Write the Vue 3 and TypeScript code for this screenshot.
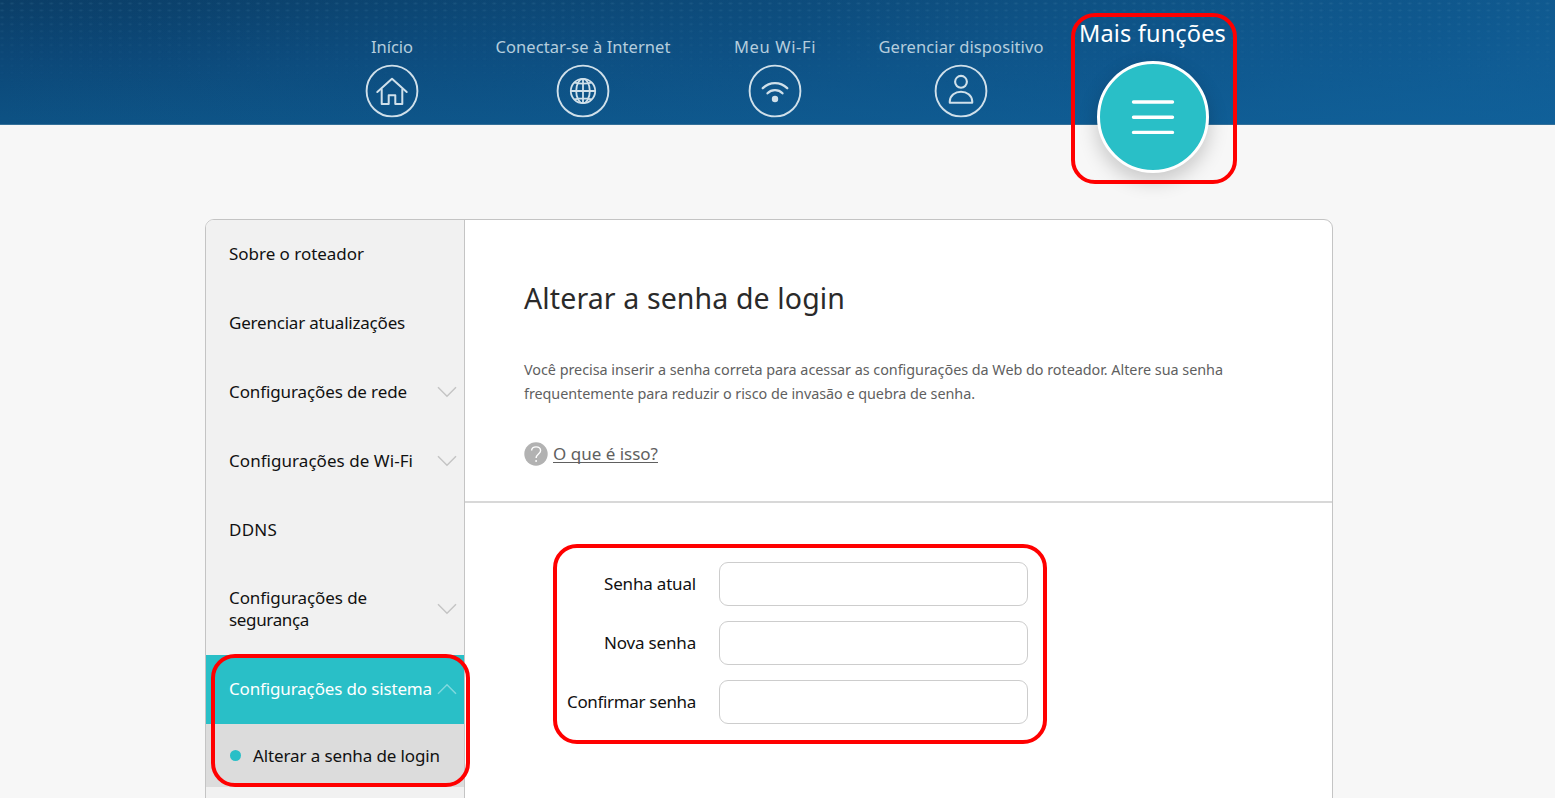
<script setup lang="ts">
import { reactive } from 'vue'

interface Line { text: string; width: number }
interface NavItem extends Line { icon: string }
interface MenuItem { lines: Line[]; chevron?: 'up' | 'down'; active?: boolean }

const nav: NavItem[] = [
  { text: 'Início', width: 42, icon: 'home' },
  { text: 'Conectar-se à Internet', width: 175, icon: 'globe' },
  { text: 'Meu Wi-Fi', width: 82, icon: 'wifi' },
  { text: 'Gerenciar dispositivo', width: 165, icon: 'user' }
]

const menu: MenuItem[] = [
  { lines: [{ text: 'Sobre o roteador', width: 135 }] },
  { lines: [{ text: 'Gerenciar atualizações', width: 176 }] },
  { lines: [{ text: 'Configurações de rede', width: 178 }], chevron: 'down' },
  { lines: [{ text: 'Configurações de Wi-Fi', width: 184 }], chevron: 'down' },
  { lines: [{ text: 'DDNS', width: 48 }] },
  { lines: [{ text: 'Configurações de', width: 138 }, { text: 'segurança', width: 80 }], chevron: 'down' },
  { lines: [{ text: 'Configurações do sistema', width: 203 }], chevron: 'up', active: true }
]

const intro: Line[] = [
  { text: 'Você precisa inserir a senha correta para acessar as configurações da Web do roteador. Altere sua senha', width: 699 },
  { text: 'frequentemente para reduzir o risco de invasão e quebra de senha.', width: 451 }
]

const fields = reactive([
  { id: 'current', text: 'Senha atual', width: 92, value: '' },
  { id: 'new', text: 'Nova senha', width: 92, value: '' },
  { id: 'confirm', text: 'Confirmar senha', width: 129, value: '' }
])

// Tracks a label so that it fills the measure given for it.
const vFit = {
  mounted(el: HTMLElement, binding: { value: number }) {
    const count = (el.textContent ?? '').trim().length
    const natural = el.getBoundingClientRect().width
    el.style.letterSpacing = `${(binding.value - natural) / count}px`
  }
}
</script>

<template>
  <div class="page">
    <header class="header">
      <nav class="nav">
        <a v-for="item in nav" :key="item.icon" class="nav-item">
          <span v-fit="item.width" class="nav-label">{{ item.text }}</span>
          <svg class="nav-icon" viewBox="0 0 54 54">
            <circle cx="27" cy="27" r="25.4" stroke-width="1.9" />
            <g v-if="item.icon === 'home'" stroke-width="2" stroke-linejoin="round" stroke-linecap="round">
              <path d="M12.3 28 27 14.8 41.7 28" />
              <path d="M16.7 25.5V40h7V31.2h6.6V40h7V25.5" />
            </g>
            <g v-else-if="item.icon === 'globe'" stroke-width="1.8">
              <circle cx="27" cy="27" r="12.2" />
              <ellipse cx="27" cy="27" rx="6.8" ry="12.2" />
              <path d="M27 15v24M15 27h24M18.5 18.6q8.5 2.2 17 0M18.5 35.4q8.5-2.2 17 0" />
            </g>
            <g v-else-if="item.icon === 'wifi'" stroke-width="2.3" stroke-linecap="round">
              <path d="M14.8 24.2Q20 19.2 27 19.2T39.2 24.2" />
              <path d="M19.5 29.3Q22.5 26.2 27 26.2T34.5 29.3" />
              <circle class="solid" cx="27" cy="35" r="3.2" />
            </g>
            <g v-else stroke-width="2.1" stroke-linejoin="round">
              <circle cx="27" cy="17.8" r="5.9" />
              <path d="M15.8 38.7V37C16.3 31.4 21 27.8 27 27.8S37.7 31.4 38.2 37v1.7Z" />
            </g>
          </svg>
        </a>
        <a class="nav-item current">
          <span v-fit="147" class="nav-label">Mais funções</span>
          <span class="more">
            <svg viewBox="0 0 44 38"><path d="M2.5 4h39M2.5 19.2h39M2.5 34.4h39" /></svg>
          </span>
        </a>
      </nav>
    </header>

    <main class="panel">
      <aside class="sidebar">
        <a v-for="item in menu" :key="item.lines[0].text" class="menu-item" :class="{ active: item.active }">
          <span class="menu-text">
            <span v-for="line in item.lines" :key="line.text" v-fit="line.width" class="line">{{ line.text }}</span>
          </span>
          <svg v-if="item.chevron" class="chevron" :class="item.chevron" viewBox="0 0 20 12">
            <path d="M1 1.2 10 10.2 19 1.2" />
          </svg>
        </a>
        <a class="sub-item"><i class="dot"></i><span v-fit="187" class="line">Alterar a senha de login</span></a>
      </aside>

      <section class="content">
        <div class="intro">
          <h1><span v-fit="321" class="line">Alterar a senha de login</span></h1>
          <p><span v-for="line in intro" :key="line.text" v-fit="line.width" class="line">{{ line.text }}</span></p>
          <a class="help">
            <svg class="help-icon" viewBox="0 0 24 24">
              <circle cx="12" cy="12" r="11.7" />
              <path d="M7.6 8.6C7.6 6.1 9.5 4.9 12 4.9s4.6 1.3 4.6 3.8c0 3-4.5 3.7-4.5 7.2M12.1 18v1.9" />
            </svg>
            <span v-fit="105" class="help-text">O que é isso?</span>
          </a>
        </div>
        <form class="form">
          <div v-for="field in fields" :key="field.id" class="row">
            <label :for="field.id"><span v-fit="field.width" class="line">{{ field.text }}</span></label>
            <input :id="field.id" v-model="field.value" type="password" />
          </div>
        </form>
      </section>
    </main>

    <div class="marker marker-more"></div>
    <div class="marker marker-menu"></div>
    <div class="marker marker-form"></div>
  </div>
</template>

<style>
body {
  overflow: hidden;
  background: #f7f7f7;
}
</style>

<style scoped>
.page {
  position: relative;
  height: 798px;
  overflow: hidden;
  box-sizing: border-box;
  background: #f7f7f7;
  color: #111;
  font-family: "Noto Sans", "Open Sans", sans-serif;
  font-size: 17px;
}
.header {
  position: relative;
  height: 125px;
  box-sizing: border-box;
  border-bottom: 1px solid #347099;
  background:
    linear-gradient(90deg, rgba(18, 104, 165, 0) 0%, rgba(18, 104, 165, 0.65) 100%),
    linear-gradient(180deg, #0b3e67 0%, #0c4777 45%, #0d5284 100%);
}
.header::before {
  content: "";
  position: absolute;
  inset: 0;
  background: radial-gradient(ellipse 3px 1.6px at center, rgba(110, 170, 200, 0.16), transparent) 7px 0 / 9.85px 6.95px;
  mask-image: linear-gradient(#000, transparent 75%);
}
.nav {
  position: relative;
  display: grid;
  grid-template-columns: 190px 192px 192px 180px 203px;
  padding-left: 297px;
}
.nav-item {
  display: flex;
  flex-direction: column;
  align-items: center;
  color: #b5cddd;
  font-size: 16.5px;
}
.nav-label {
  margin-top: 35px;
  line-height: 24px;
  white-space: nowrap;
}
.nav-icon {
  width: 54px;
  height: 54px;
  margin-top: 5px;
  fill: none;
  stroke: #d0e0ea;
}
.solid {
  fill: #d0e0ea;
  stroke: none;
}
.current {
  color: #fff;
  font-size: 23.5px;
}
.current .nav-label {
  margin-top: 17px;
  line-height: 32px;
}
.more {
  display: flex;
  align-items: center;
  justify-content: center;
  width: 112px;
  height: 112px;
  margin-top: 12px;
  box-sizing: border-box;
  border: 3.5px solid #fff;
  border-radius: 50%;
  background: #29bfc7;
  box-shadow: 0 8px 20px rgba(0, 0, 0, 0.2);
}
.more svg {
  width: 44px;
  height: 38px;
  fill: none;
  stroke: #fff;
  stroke-width: 3.4;
  stroke-linecap: round;
}
.panel {
  display: flex;
  width: 1127.5px;
  height: 620px;
  margin: 94px 0 0 205px;
  box-sizing: border-box;
  border: 1.5px solid #c4c4c4;
  border-radius: 9px 9px 0 0;
  background: #fff;
  overflow: hidden;
}
.sidebar {
  flex: none;
  width: 259px;
  box-sizing: border-box;
  border-right: 1px solid #c4c4c4;
  background: #f1f1f1;
}
.menu-item {
  display: flex;
  align-items: center;
  justify-content: space-between;
  min-height: 68.8px;
  padding: 0 7px 0 23px;
  box-sizing: border-box;
}
.menu-text {
  display: flex;
  flex-direction: column;
  align-items: flex-start;
  padding: 23.4px 0;
  line-height: 22px;
}
.line {
  display: inline-block;
  white-space: nowrap;
}
.active {
  background: #29bfc7;
  color: #fff;
}
.chevron {
  width: 20px;
  height: 12px;
  flex: none;
  fill: none;
  stroke: #c4c4c4;
  stroke-width: 1.5;
}
.chevron.up {
  transform: rotate(180deg);
  stroke: #7fd9de;
}
.sub-item {
  display: flex;
  align-items: center;
  height: 63.5px;
  padding-left: 24px;
  box-sizing: border-box;
  background: #dcdcdc;
}
.dot {
  width: 11px;
  height: 11px;
  margin-right: 12px;
  border-radius: 50%;
  background: #29bfc7;
}
.content {
  flex: 1;
}
.intro {
  height: 283px;
  box-sizing: border-box;
  padding: 57px 0 0 59px;
  border-bottom: 2px solid #d8d8d8;
}
h1 {
  margin: 0;
  color: #2a2a2a;
  font-size: 28.5px;
  font-weight: 400;
  line-height: 42px;
}
p {
  display: flex;
  flex-direction: column;
  align-items: flex-start;
  margin: 39px 0 0;
  color: #5f5f5f;
  font-size: 14.4px;
  line-height: 23.5px;
}
.help {
  display: flex;
  align-items: center;
  margin: 36px 0 0;
  color: #606060;
  height: 26px;
}
.help-icon {
  width: 24px;
  height: 24px;
  margin-right: 5px;
  fill: #b2b2b2;
}
.help-icon path {
  fill: none;
  stroke: #fff;
  stroke-width: 1.4;
}
.help-text {
  font-size: 17px;
  line-height: 26px;
  white-space: nowrap;
  text-decoration: underline;
  text-underline-offset: 2px;
  text-decoration-skip-ink: none;
}
.form {
  display: flex;
  flex-direction: column;
  gap: 15px;
  padding: 59px 0 0 89px;
}
.row {
  display: flex;
  align-items: center;
}
.row label {
  width: 142px;
  margin-right: 23px;
  padding-bottom: 1px;
  text-align: right;
}
.row input {
  width: 309px;
  height: 44px;
  padding: 0 12px;
  box-sizing: border-box;
  border: 1.5px solid #cdcdcd;
  border-radius: 9px;
  outline: none;
  background: #fff;
  font: inherit;
}
.marker {
  position: absolute;
  box-sizing: border-box;
  border: 4px solid #f00;
  border-radius: 24px;
  pointer-events: none;
}
.marker-more {
  left: 1071px;
  top: 13px;
  width: 166px;
  height: 171px;
}
.marker-menu {
  left: 211px;
  top: 654px;
  width: 259px;
  height: 133px;
}
.marker-form {
  left: 553px;
  top: 544px;
  width: 494px;
  height: 200px;
}
</style>
